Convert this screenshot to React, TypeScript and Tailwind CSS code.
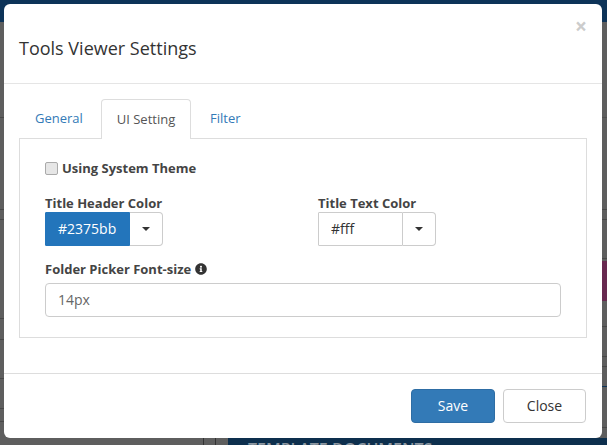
/**
 * Tools viewer settings modal, shown over the dimmed page.
 */

import { FaInfoCircle } from 'react-icons/fa';

function ColorPicker({ value, filled = false }: { value: string; filled?: boolean }) {
  return (
    <div className="flex h-[34px] w-[118px]">
      <div
        className={
          filled
            ? 'flex w-[85px] items-center rounded-l-[1px] border border-[#2375bb] bg-[#2375bb] pl-3 text-sm text-white'
            : 'flex w-[85px] items-center rounded-l-[1px] border border-[#ccc] bg-white pl-3 text-sm text-[#333]'
        }
      >
        {value}
      </div>
      <div className="flex flex-1 items-center justify-center rounded-r-[4px] border border-l-0 border-[#ccc] bg-white">
        <span className="h-0 w-0 border-x-4 border-t-4 border-x-transparent border-t-[#333]" />
      </div>
    </div>
  );
}

export default function App() {
  return (
    <div className="relative flex h-[445px] w-[607px] flex-col overflow-hidden bg-[#5e5e5e] font-['Open_Sans',sans-serif]">
      <div className="h-[22px] bg-[#0d3358]" />

      {/* page behind the overlay, only its edges show */}
      <div className="flex flex-1 justify-between">
        <div className="w-[4px]">
          <div className="h-[96px] border-b border-[#484848]" />
          <div className="h-[92px] border-b border-[#484848]" />
          <div className="h-[10px] border-b border-[#484848]" />
          <div className="h-[99px] border-b border-[#484848]" />
          <div className="h-[21px] border-b border-[#484848]" />
          <div className="h-[39px] border-b border-[#484848]" />
          <div className="h-[30px] border-b border-[#484848]" />
          <div className="h-[13px] border-b border-[#484848]" />
        </div>
        <div className="w-[5px]">
          <div className="h-[96px] border-b border-[#505050]" />
          <div className="h-[92px] border-b border-[#484848]" />
          <div className="h-[10px] border-b border-[#484848]" />
          <div className="h-[39px] border-b border-[#484848]" />
          <div className="h-[2px]" />
          <div className="h-[40px] bg-[#67294f]" />
          <div className="h-[26px] border-b border-[#484848]" />
          <div className="h-[30px] border-b border-[#484848]" />
          <div className="h-[10px] border-b border-[#484848]" />
          <div className="h-[20px] border-b border-[#0d3358]" />
          <div className="h-[41px] border-b border-[#484848]" />
        </div>
      </div>

      <div className="flex h-[7px]">
        <div className="ml-[203px] w-[12px] border-l border-[#333]" />
        <div className="w-[13px] border-l border-[#333]" />
        <div className="flex-1 overflow-hidden bg-[#0d2f4d] pl-5 pt-[3px] text-base font-semibold leading-4 text-[#8c97a1]">
          TEMPLATE DOCUMENTS
        </div>
      </div>

      <div className="absolute left-1 top-1 flex h-[434px] w-[598px] flex-col rounded-[6px] bg-white">
        <div className="flex h-[80px] shrink-0 items-start justify-between border-b border-[#e5e5e5] px-[15px]">
          <h4 className="mt-[30px] text-lg leading-[28px] text-[#333]">Tools Viewer Settings</h4>
          <span className="mt-[12px] text-[21px] font-bold leading-[21px] text-[#ccc]">×</span>
        </div>

        <div className="flex-1 px-[15px] pt-[15px]">
          <div className="flex h-[39px] items-start">
            <div className="flex h-10 w-[82px] items-center pl-4 text-[13px] text-[#337ab7]">General</div>
            <div className="relative z-10 flex h-10 w-[90px] items-center justify-center rounded-t-[4px] border border-b-0 border-[#ddd] bg-white text-[13px] text-[#555]">
              UI Setting
            </div>
            <div className="flex h-10 items-center pl-[19px] text-[13px] text-[#337ab7]">Filter</div>
          </div>
          <div className="h-[200px] border border-[#ddd] px-[25px] pt-[23px] text-[#444]">
            <label className="flex items-center gap-[4px] text-[13px] font-bold leading-[13px]">
              <span className="h-[13px] w-[13px] rounded-[2px] border border-[#aaa] bg-[#e6e6e6]" />
              Using System Theme
            </label>
            <div className="mt-[19px] flex">
              <div className="w-[273px]">
                <div className="text-[13px] font-bold leading-[18px]">Title Header Color</div>
                <ColorPicker value="#2375bb" filled />
              </div>
              <div>
                <div className="text-[13px] font-bold leading-[18px]">Title Text Color</div>
                <ColorPicker value="#fff" />
              </div>
            </div>
            <div className="mt-[14px] flex items-center gap-[4px] text-[13px] font-bold leading-[18px]">
              Folder Picker Font-size
              <FaInfoCircle className="h-3 w-3 text-[#333]" />
            </div>
            <div className="mt-[5px] flex h-[34px] w-[516px] items-center rounded-[4px] border border-[#ccc] bg-white pl-3 text-sm text-[#666]">
              14px
            </div>
          </div>
        </div>

        <div className="flex h-[65px] shrink-0 items-start justify-end gap-2 border-t border-[#ddd] pr-[16px] pt-[15px]">
          <button className="h-[34px] w-[84px] rounded-[4px] border border-[#2e6da4] bg-[#337ab7] text-sm text-white">
            Save
          </button>
          <button className="h-[34px] w-[83px] rounded-[4px] border border-[#ccc] bg-white text-sm text-[#333]">
            Close
          </button>
        </div>
      </div>
    </div>
  );
}
